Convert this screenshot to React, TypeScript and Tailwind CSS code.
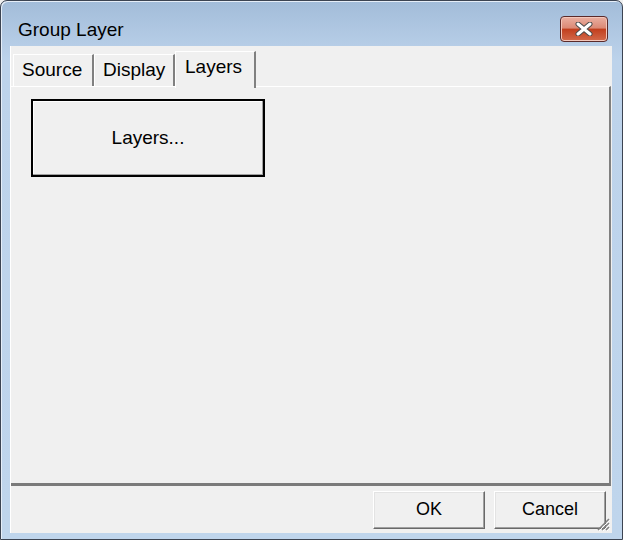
import { useState } from "react"

const tabs = ["Source", "Display", "Layers"]

const CloseIcon = () => (
    <svg width="22" height="14" viewBox="0 0 22 14">
        <path d="M5 2 L17 12 M17 2 L5 12" stroke="#4a4a4a" strokeWidth="5" strokeLinecap="round" />
        <path d="M5 2 L17 12 M17 2 L5 12" stroke="#ffffff" strokeWidth="3" strokeLinecap="round" />
    </svg>
)

const Grip = () => (
    <svg width="16" height="16" viewBox="0 0 16 16">
        <path d="M14 3 L3 14 M14 7 L7 14 M14 11 L11 14" stroke="#808080" strokeWidth="1.5" />
        <path d="M15 4 L4 15 M15 8 L8 15 M15 12 L12 15" stroke="#ffffff" strokeWidth="1" />
    </svg>
)

const DialogButton = ({ label }: { label: string }) => (
    <button className="w-[112px] h-[38px] bg-[#f0f0f0] border border-t-white border-l-white border-r-[#696969] border-b-[#696969] shadow-[inset_-1px_-1px_0_#a0a0a0,inset_1px_1px_0_#e3e3e3] text-[18px] text-black">
        {label}
    </button>
)

const App = () => {
    const [active, setActive] = useState(2)

    return (
        <div className="w-[623px] h-[540px] bg-[#f0f0f0] font-['Liberation_Sans',Arial,sans-serif]">
            <div className="w-[623px] h-[540px] flex flex-col border border-[#3c4452] rounded-t-[7px] bg-[linear-gradient(#a2bcd9,#bdd3eb_60px,#bfd5ec)] shadow-[inset_1px_1px_0_#e6eef8]">
                {/* title bar */}
                <div className="h-[45px] flex items-start justify-between pl-[17px] pr-[14px]">
                    <span className="mt-[18px] leading-[22px] text-[19px] text-black">Group Layer</span>
                    <div className="mt-[15px] w-[48px] h-[26px] flex items-center justify-center rounded-[4px] border border-[#5a2a2a] bg-[linear-gradient(#eab0a2,#dc8a76_45%,#c2401f_52%,#d36a4b)] shadow-[inset_0_0_0_1px_#f3c7bb]">
                        <CloseIcon />
                    </div>
                </div>

                {/* client area */}
                <div className="flex-1 ml-[9px] mr-[10px] mb-[6px] flex flex-col bg-[#f0f0f0] border-l border-white">
                    {/* tab strip */}
                    <div className="h-[40px] flex items-end pl-[2px]">
                        {tabs.map((t, i) =>
                            i === active ? (
                                <button key={t} onClick={() => setActive(i)}
                                    className="relative z-10 -mb-[2px] h-[37px] px-[9px] w-[81px] text-left bg-[#f0f0f0] border-t border-l border-white border-r-2 border-r-[#808080] text-[19px] text-black">
                                    <span className="relative -top-[3px]">{t}</span>
                                </button>
                            ) : (
                                <button key={t} onClick={() => setActive(i)}
                                    className="h-[32px] w-[81px] px-[8px] text-left bg-[#f0f0f0] border-t border-l border-white border-r-2 border-r-[#808080] text-[19px] text-black">
                                    {t}
                                </button>
                            )
                        )}
                    </div>

                    {/* panel */}
                    <div className="h-[400px] mr-[1px] border-t border-white border-r-2 border-r-[#808080] border-b-[3px] border-b-[#7a7a7a] pt-[12px] pl-[20px]">
                        <button className="w-[234px] h-[78px] border-2 border-black bg-[#f0f0f0] shadow-[inset_-1px_-1px_0_#a0a0a0,inset_1px_1px_0_#ffffff] text-[19px] text-black">
                            Layers...
                        </button>
                    </div>

                    {/* bottom buttons */}
                    <div className="flex-1 relative flex items-center justify-end gap-[9px] pr-[6px]">
                        <DialogButton label="OK" />
                        <DialogButton label="Cancel" />
                        <div className="absolute right-[1px] bottom-[1px]">
                            <Grip />
                        </div>
                    </div>
                </div>
            </div>
        </div>
    )
}

export default App
